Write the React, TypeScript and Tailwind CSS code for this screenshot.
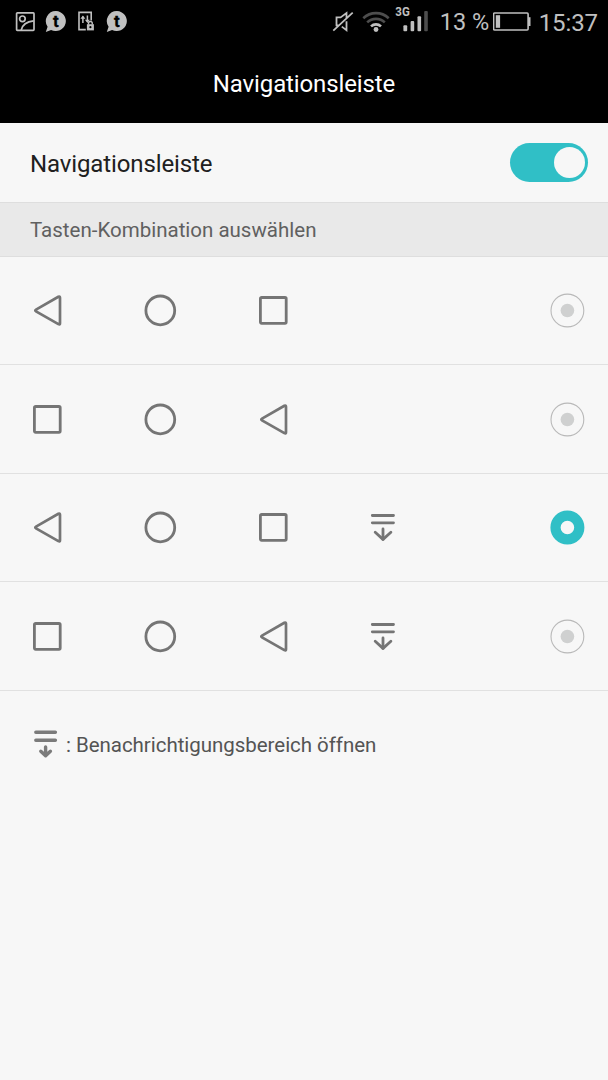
import React from 'react';

type NavKey = 'back' | 'home' | 'recent' | 'panel';

const combinations: NavKey[][] = [
  ['back', 'home', 'recent'],
  ['recent', 'home', 'back'],
  ['back', 'home', 'recent', 'panel'],
  ['recent', 'home', 'back', 'panel'],
];

const BackIcon = () => (
  <svg width="36" height="36" viewBox="0 0 36 36" fill="none" stroke="#757575" strokeWidth="2.7" strokeLinejoin="round">
    <path d="M31 5.8q0-1.9-1.6-1L7 17.6q-1.5.9 0 1.8L29.4 32.2q1.6.9 1.6-1z" />
  </svg>
);

const HomeIcon = () => (
  <svg width="36" height="36" viewBox="0 0 36 36" fill="none" stroke="#757575" strokeWidth="2.8">
    <circle cx="18.3" cy="18.4" r="14.4" />
  </svg>
);

const RecentIcon = () => (
  <svg width="36" height="36" viewBox="0 0 36 36" fill="none" stroke="#757575" strokeWidth="2.8">
    <rect x="5.4" y="5.5" width="25.8" height="25.8" rx="1.2" />
  </svg>
);

const PanelIcon = () => (
  <svg width="36" height="36" viewBox="0 0 36 36" fill="none" stroke="#757575" strokeWidth="2.8" strokeLinecap="round">
    <path d="M7.3 6.5h21.2M7.3 13.8h21.2M18 20v10.4" />
    <path d="M10.2 23.2l7.8 7.2 7.9-7.2" strokeLinejoin="round" />
  </svg>
);

const icons: Record<NavKey, React.FC> = {
  back: BackIcon,
  home: HomeIcon,
  recent: RecentIcon,
  panel: PanelIcon,
};

const ChatIcon = () => (
  <svg width="22" height="22" viewBox="0 0 22 22">
    <path d="M11 .1a10 10 0 1 1-4.9 18.8L.8 20.9l1.8-5.2A10 10 0 0 1 11 .1z" fill="#c0c0c0" />
    <text x="11" y="16.4" textAnchor="middle" fontFamily="Roboto, sans-serif" fontWeight="700" fontSize="17" fill="#000" stroke="#000" strokeWidth=".3">
      t
    </text>
  </svg>
);

const StatusBar = () => (
  <div className="flex h-11 items-center justify-between pl-[15px] pr-[10px] text-[#c0c0c0]">
    <div className="flex items-center">
      <svg className="mr-[10px]" width="20" height="20" viewBox="0 0 20 20" fill="none" stroke="#c0c0c0" strokeWidth="1.7">
        <rect x="1.6" y=".9" width="17.4" height="17.4" rx=".8" />
        <circle cx="7.4" cy="6.8" r="2.8" />
        <path d="M6.2 18c1.1-4.8 4.8-8.4 12.4-9.2" />
      </svg>
      <ChatIcon />
      <svg className="ml-[10px] mr-[11px]" width="18" height="22" viewBox="0 0 18 22" fill="none" stroke="#c0c0c0" strokeWidth="1.6">
        <path d="M8.8 18.6H2V1.4h12.2v8" />
        <path d="M5.9 12V5.6M10.4 4.4v6.4" strokeWidth="1.5" />
        <path d="M3.4 7.7l2.5-3.3 2.5 3.3zM7.9 8.8l2.5 3.3 2.5-3.3z" fill="#c0c0c0" stroke="none" />
        <path d="M11.5 13.6v-1.2a1.9 1.9 0 0 1 3.8 0v1.2" strokeWidth="1.4" />
        <path d="M9.9 13.2h7v6.2h-7z" fill="#c0c0c0" stroke="none" />
        <circle cx="13.4" cy="16.2" r="1.1" fill="#000" stroke="none" />
      </svg>
      <ChatIcon />
    </div>
    <div className="flex items-center">
      <svg width="22" height="22" viewBox="0 0 22 22" fill="none" stroke="#c0c0c0" strokeWidth="1.8">
        <path d="M14.5 7V2L8.6 6.4H4.5v8h2.2M9.8 15.6l4.7 3.6v-9M1.3 19.7L20.7 1.7" />
      </svg>
      <svg className="ml-2" width="28" height="22" viewBox="0 0 28 22" fill="none" strokeWidth="2.6">
        <path d="M1.3 7.2a18.4 18.4 0 0 1 25.4 0" stroke="#4d4d4d" />
        <path d="M5.2 11.4a12.7 12.7 0 0 1 17.6 0" stroke="#4d4d4d" />
        <path d="M9 15.4a7.3 7.3 0 0 1 10 0" stroke="#c0c0c0" />
        <circle cx="14" cy="18.5" r="2.4" fill="#c0c0c0" />
      </svg>
      <svg className="ml-[5px]" width="34" height="38" viewBox="0 -5 34 38">
        <text x=".3" y="8.2" fontFamily="Roboto, sans-serif" fontWeight="700" fontSize="12" textLength="14.5" lengthAdjust="spacingAndGlyphs" fill="#c0c0c0">
          3G
        </text>
        <rect x="8.4" y="17.2" width="3.8" height="6.1" rx="1" fill="#c0c0c0" />
        <rect x="15.6" y="12.9" width="3.6" height="10.4" rx="1" fill="#c0c0c0" />
        <rect x="22.5" y="8.2" width="3.6" height="15.1" rx="1" fill="#c0c0c0" />
        <rect x="29.2" y="3" width="3.6" height="20.3" rx="1" fill="#4d4d4d" />
      </svg>
      <span className="ml-[10.5px] w-[52px] whitespace-nowrap pt-px text-[23.5px] leading-none">13 %</span>
      <svg className="ml-px" width="38" height="20" viewBox="0 0 38 20">
        <rect x=".6" y="1" width="34.5" height="17" rx="1" fill="none" stroke="#c0c0c0" strokeWidth="1.6" />
        <rect x="2.8" y="3.2" width="4.3" height="12.6" fill="#c0c0c0" />
        <rect x="35.1" y="5.2" width="2.4" height="8.8" fill="#c0c0c0" />
      </svg>
      <span className="ml-2 whitespace-nowrap pt-px text-[24px] leading-none tracking-[-0.1px]">15:37</span>
    </div>
  </div>
);

const Radio = ({ checked }: { checked: boolean }) => (
  <svg width="36" height="36" viewBox="0 0 36 36">
    {checked ? (
      <circle cx="18.4" cy="18.5" r="11.9" fill="none" stroke="#30bfc6" strokeWidth="10.2" />
    ) : (
      <>
        <circle cx="18.4" cy="18.5" r="16.4" fill="none" stroke="#b9b9b9" strokeWidth="1.1" />
        <circle cx="18.4" cy="18.5" r="6.8" fill="#cfd0d0" />
      </>
    )}
  </svg>
);

const App: React.FC = () => {
  const selected = 2;

  return (
    <div className="min-h-screen bg-[#f7f7f7] font-['Roboto',sans-serif]">
      <header className="h-[123px] bg-black">
        <StatusBar />
        <h1 className="pt-[25px] text-center text-[24px] leading-[31px] tracking-[-0.12px] text-white">Navigationsleiste</h1>
      </header>

      <section className="flex h-[79px] items-center justify-between pl-[30px] pr-5">
        <span className="pt-[3px] text-[24px] leading-none tracking-[-0.12px] text-[#202020]">Navigationsleiste</span>
        <button className="flex h-[39px] w-[78px] items-center justify-end rounded-full bg-[#30bfc6] pr-[3.5px]">
          <span className="size-[31px] rounded-full bg-[#f7f7f7]" />
        </button>
      </section>

      <h2 className="flex h-[54.5px] items-center border-y border-[#dedede] bg-[#e9e9e9] pl-[30px] pt-[3px] text-[20.5px] text-[#606060]">
        Tasten-Kombination auswählen
      </h2>

      <ul>
        {combinations.map((keys, index) => (
          <li
            key={index}
            className="flex h-[108.6px] items-center justify-between border-b border-[#e1e1e1] pl-[29px] pr-[23px]"
          >
            <div className="grid grid-cols-[113px_113px_110px_36px]">
              {keys.map((key) => {
                const Icon = icons[key];
                return <Icon key={key} />;
              })}
            </div>
            <Radio checked={index === selected} />
          </li>
        ))}
      </ul>

      <p className="flex items-center pl-[33px] pt-[38px] text-[20.5px] leading-8 tracking-[-0.04px] text-[#545454]">
        <svg
          className="mr-2 shrink-0"
          width="25"
          height="32"
          viewBox="0 0 25 32"
          fill="none"
          stroke="#7b7b7b"
          strokeWidth="3.4"
          strokeLinecap="round"
        >
          <path d="M2.8 3.2h19.6M2.8 11.2h19.6" />
          <path d="M12.6 18v8.6M7.8 22.2l4.8 4.6 4.8-4.6" strokeLinejoin="round" />
        </svg>
        : Benachrichtigungsbereich öffnen
      </p>
    </div>
  );
};

export default App;
